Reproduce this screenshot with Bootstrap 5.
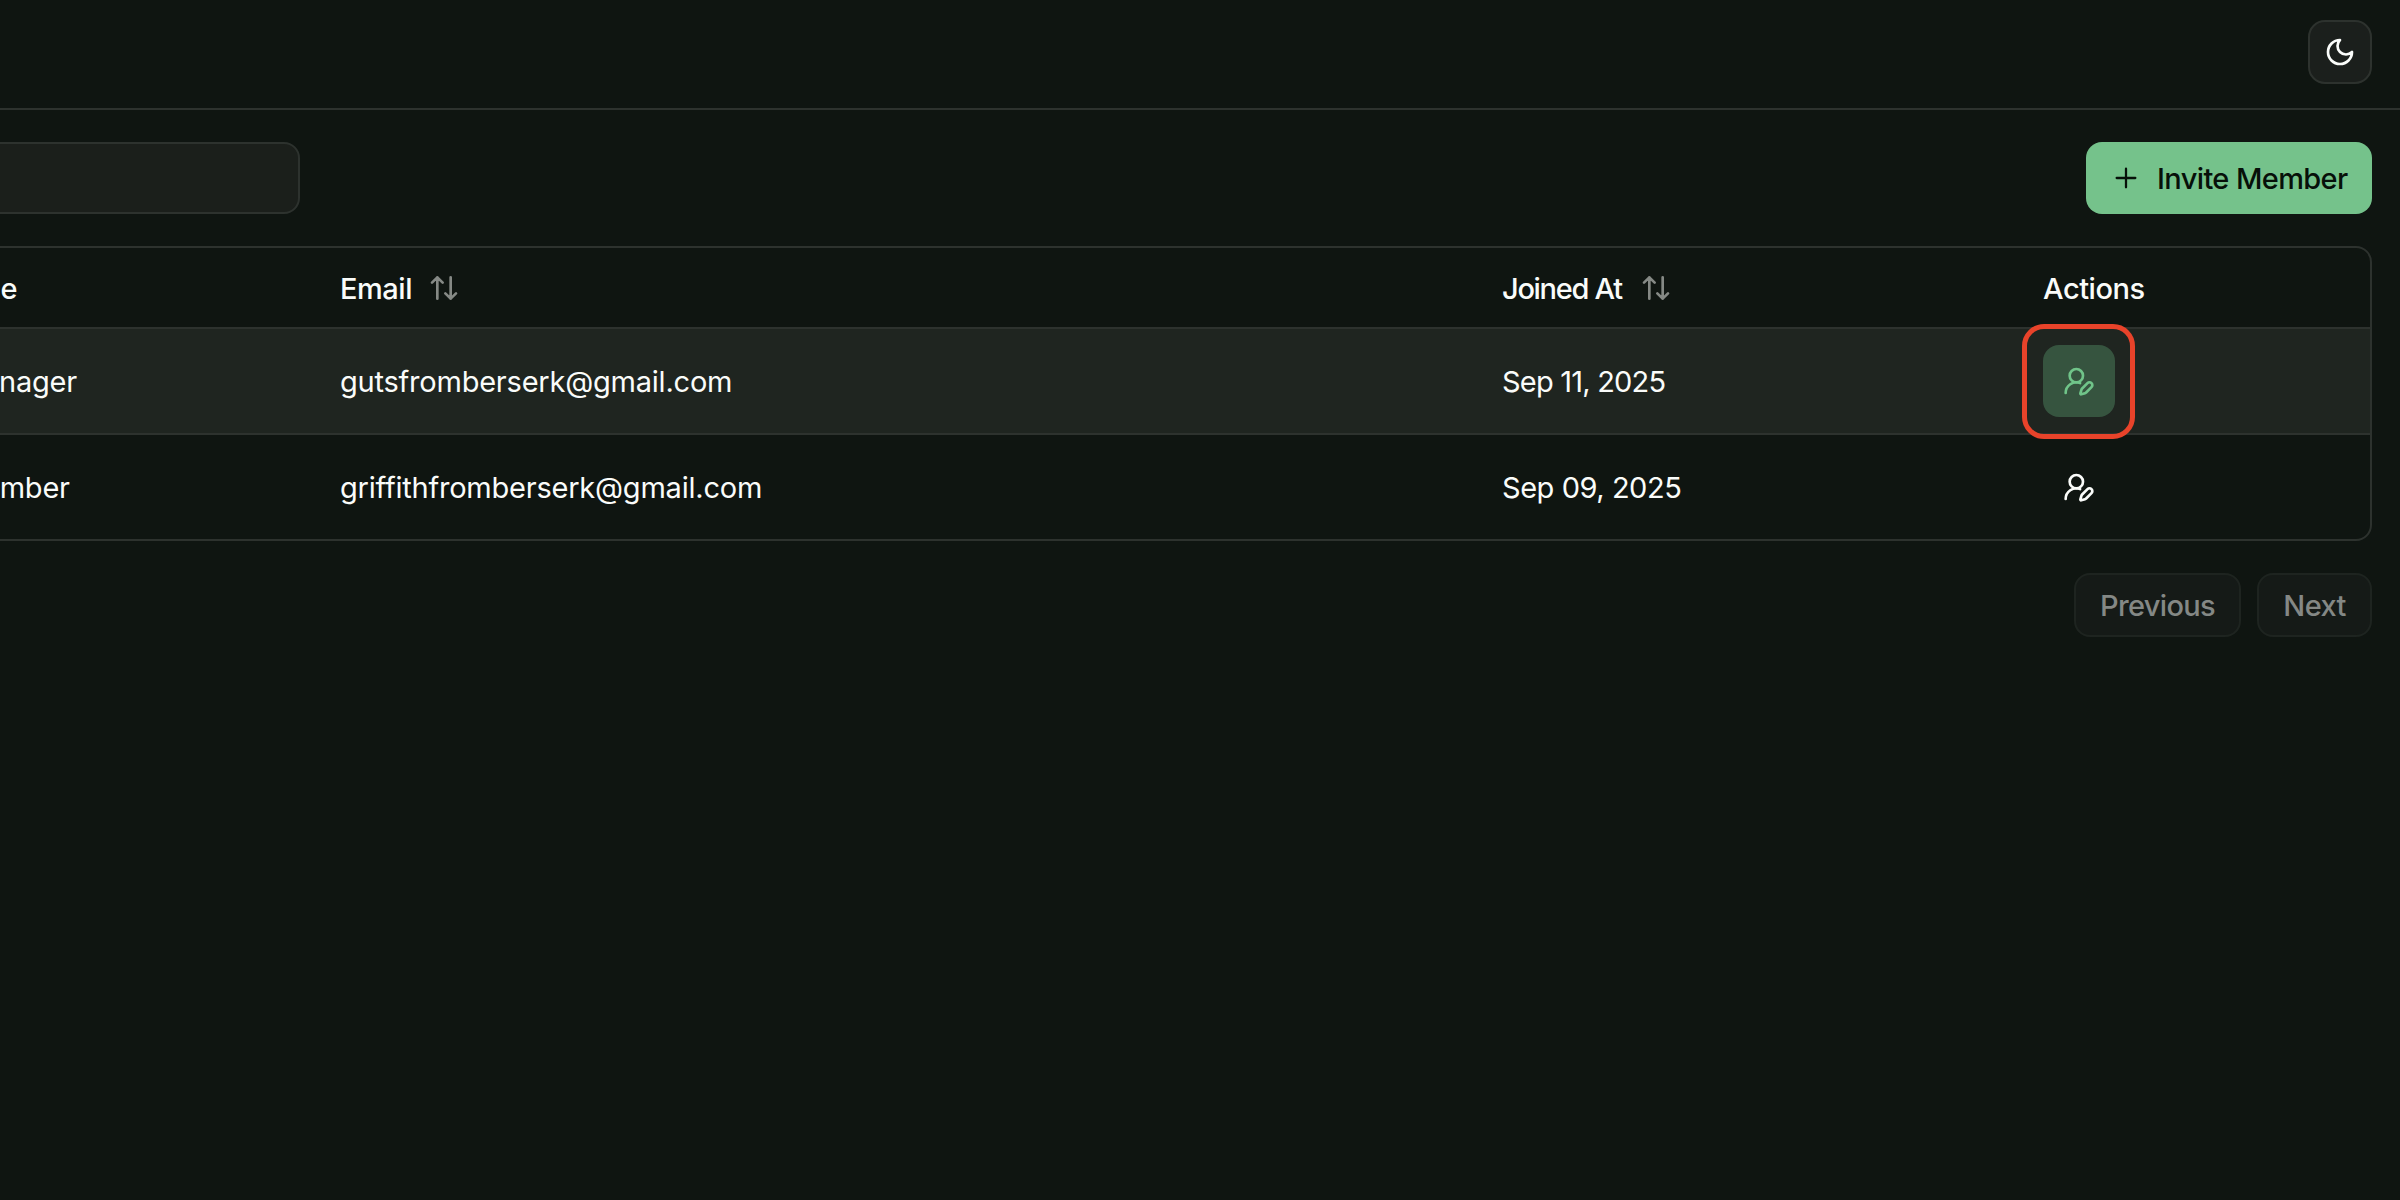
<!DOCTYPE html>
<html lang="en">
<head>
<meta charset="utf-8">
<meta name="viewport" content="width=device-width, initial-scale=1">
<title>Team members</title>
<link href="https://cdn.jsdelivr.net/npm/bootstrap@5.3.0/dist/css/bootstrap.min.css" rel="stylesheet">
<style>
  :root { --line: #2d322e; --fg: #fafcfa; --green: #75c28b; }
  body { background: #0f1511; color: var(--fg); font-family: Inter, "Liberation Sans", sans-serif; font-size: 29px; line-height: 40px; height: 1200px; }
  svg { width: 32px; height: 32px; flex: none; display: block; fill: none; stroke: currentColor; stroke-width: 2; stroke-linecap: round; stroke-linejoin: round; }
  .topbar { height: 110px; border-bottom: 2px solid var(--line); padding: 20px 28px 0 0; }
  .theme-btn { width: 64px; height: 64px; background: #1b1f1c; border: 2px solid var(--line); border-radius: 17px; color: var(--fg); }
  .page-body { padding: 32px 28px 0 0; }
  .search-box, .search-box:focus { width: 364px; height: 72px; margin-left: -64px; background: #1b1f1b; border: 2px solid var(--line); border-radius: 16px; color: var(--fg); }
  .invite-btn { width: 286px; height: 72px; border: 0; border-radius: 16px; background: var(--green); color: #071009; font-size: 29px; line-height: 40px; font-weight: 500; letter-spacing: -.62px; padding: 0 0 0 24px; gap: 15px; }
  .invite-btn svg { stroke-width: 1.7; }
  .invite-btn span { padding-top: 1px; }
  .members { margin: 32px 0 0 -64px; border: 2px solid var(--line); border-radius: 16px; }
  .members table { table-layout: fixed; border-collapse: separate; border-spacing: 0; color: var(--fg); }
  .members th, .members td { padding: 0 20px; border: 0 solid var(--line); vertical-align: middle; white-space: nowrap; background: transparent; color: var(--fg); box-shadow: none; }
  .members th { height: 81px; border-bottom-width: 2px; font-weight: 500; letter-spacing: -.45px; padding-top: 2px; }
  .members td { height: 104px; letter-spacing: -.22px; }
  .members td:not(:last-child) { padding-top: 2px; }
  .members tr.active-row td { height: 106px; border-bottom-width: 2px; background: #1f2520; }
  .members .c-role { width: 382px; letter-spacing: -.2px; } .c-email { width: 1162px; } .c-joined { width: 541px; }
  .members td:first-child { padding-left: 19px; }
  .members td.tight { letter-spacing: -.8px; }
  .members td.semi { letter-spacing: -.45px; }
  .sorter { gap: 16px; }
  .sorter svg { color: #858985; margin-top: -1px; }
  .sorter.narrow { letter-spacing: -1.3px; gap: 18px; }
  .row-btn { width: 72px; height: 72px; border: 0; border-radius: 16px; color: var(--fg); background: transparent; }
  .row-btn.on { background: #36543f; color: #70c489; }
  .callout-ring { position: absolute; inset: -21px -20px -22px -21px; border: 5px solid #e8432a; border-radius: 22px; }
  .pager { margin-top: 32px; gap: 16px; }
  .pager .btn { height: 64px; padding: 1px 0 0; font-size: 29px; line-height: 40px; font-weight: 500; letter-spacing: -.65px; background: #151a17; border: 2px solid #1e2420; border-radius: 16px; color: #848885; opacity: 1; }
  .prev { width: 167px; } .next { width: 115px; }
</style>
</head>
<body class="overflow-hidden">
<header class="topbar d-flex justify-content-end">
  <button class="btn theme-btn d-flex align-items-center justify-content-center p-0" aria-label="Theme">
    <svg viewBox="0 0 24 24"><path d="M12 3a6 6 0 0 0 9 9 9 9 0 1 1-9-9Z"/></svg>
  </button>
</header>
<main class="page-body">
  <div class="d-flex justify-content-between">
    <input class="form-control search-box" type="text" aria-label="Search">
    <button class="btn invite-btn d-flex align-items-center">
      <svg viewBox="0 0 24 24"><path d="M5 12h14M12 5v14"/></svg><span>Invite Member</span>
    </button>
  </div>
  <div class="members overflow-hidden">
    <table class="table mb-0">
      <thead>
        <tr>
          <th class="c-role">Role</th>
          <th class="c-email"><div class="sorter d-flex align-items-center">Email<svg viewBox="0 0 24 24"><path d="m21 16-4 4-4-4M17 20V4M3 8l4-4 4 4M7 4v16"/></svg></div></th>
          <th class="c-joined"><div class="sorter narrow d-flex align-items-center">Joined At<svg viewBox="0 0 24 24"><path d="m21 16-4 4-4-4M17 20V4M3 8l4-4 4 4M7 4v16"/></svg></div></th>
          <th>Actions</th>
        </tr>
      </thead>
      <tbody>
        <tr class="active-row">
          <td>Manager</td>
          <td>gutsfromberserk@gmail.com</td>
          <td class="tight">Sep 11, 2025</td>
          <td>
            <div class="position-relative d-inline-block align-middle">
              <button class="btn row-btn on d-flex align-items-center justify-content-center p-0" aria-label="Edit role">
                <svg viewBox="0 0 24 24"><path d="M2 21a8 8 0 0 1 10.821-7.487"/><path d="M21.378 16.626a1 1 0 0 0-3.004-3.004l-4.01 4.012a2 2 0 0 0-.506.854l-.837 2.87a.5.5 0 0 0 .62.62l2.87-.837a2 2 0 0 0 .854-.506z"/><circle cx="10" cy="8" r="5"/></svg>
              </button>
              <div class="callout-ring"></div>
            </div>
          </td>
        </tr>
        <tr>
          <td>Member</td>
          <td>griffithfromberserk@gmail.com</td>
          <td class="semi">Sep 09, 2025</td>
          <td>
            <button class="btn row-btn d-flex align-items-center justify-content-center p-0" aria-label="Edit role">
              <svg viewBox="0 0 24 24"><path d="M2 21a8 8 0 0 1 10.821-7.487"/><path d="M21.378 16.626a1 1 0 0 0-3.004-3.004l-4.01 4.012a2 2 0 0 0-.506.854l-.837 2.87a.5.5 0 0 0 .62.62l2.87-.837a2 2 0 0 0 .854-.506z"/><circle cx="10" cy="8" r="5"/></svg>
            </button>
          </td>
        </tr>
      </tbody>
    </table>
  </div>
  <div class="pager d-flex justify-content-end">
    <button class="btn prev" disabled>Previous</button>
    <button class="btn next" disabled>Next</button>
  </div>
</main>
<script src="https://cdn.jsdelivr.net/npm/bootstrap@5.3.0/dist/js/bootstrap.bundle.min.js"></script>
</body>
</html>
